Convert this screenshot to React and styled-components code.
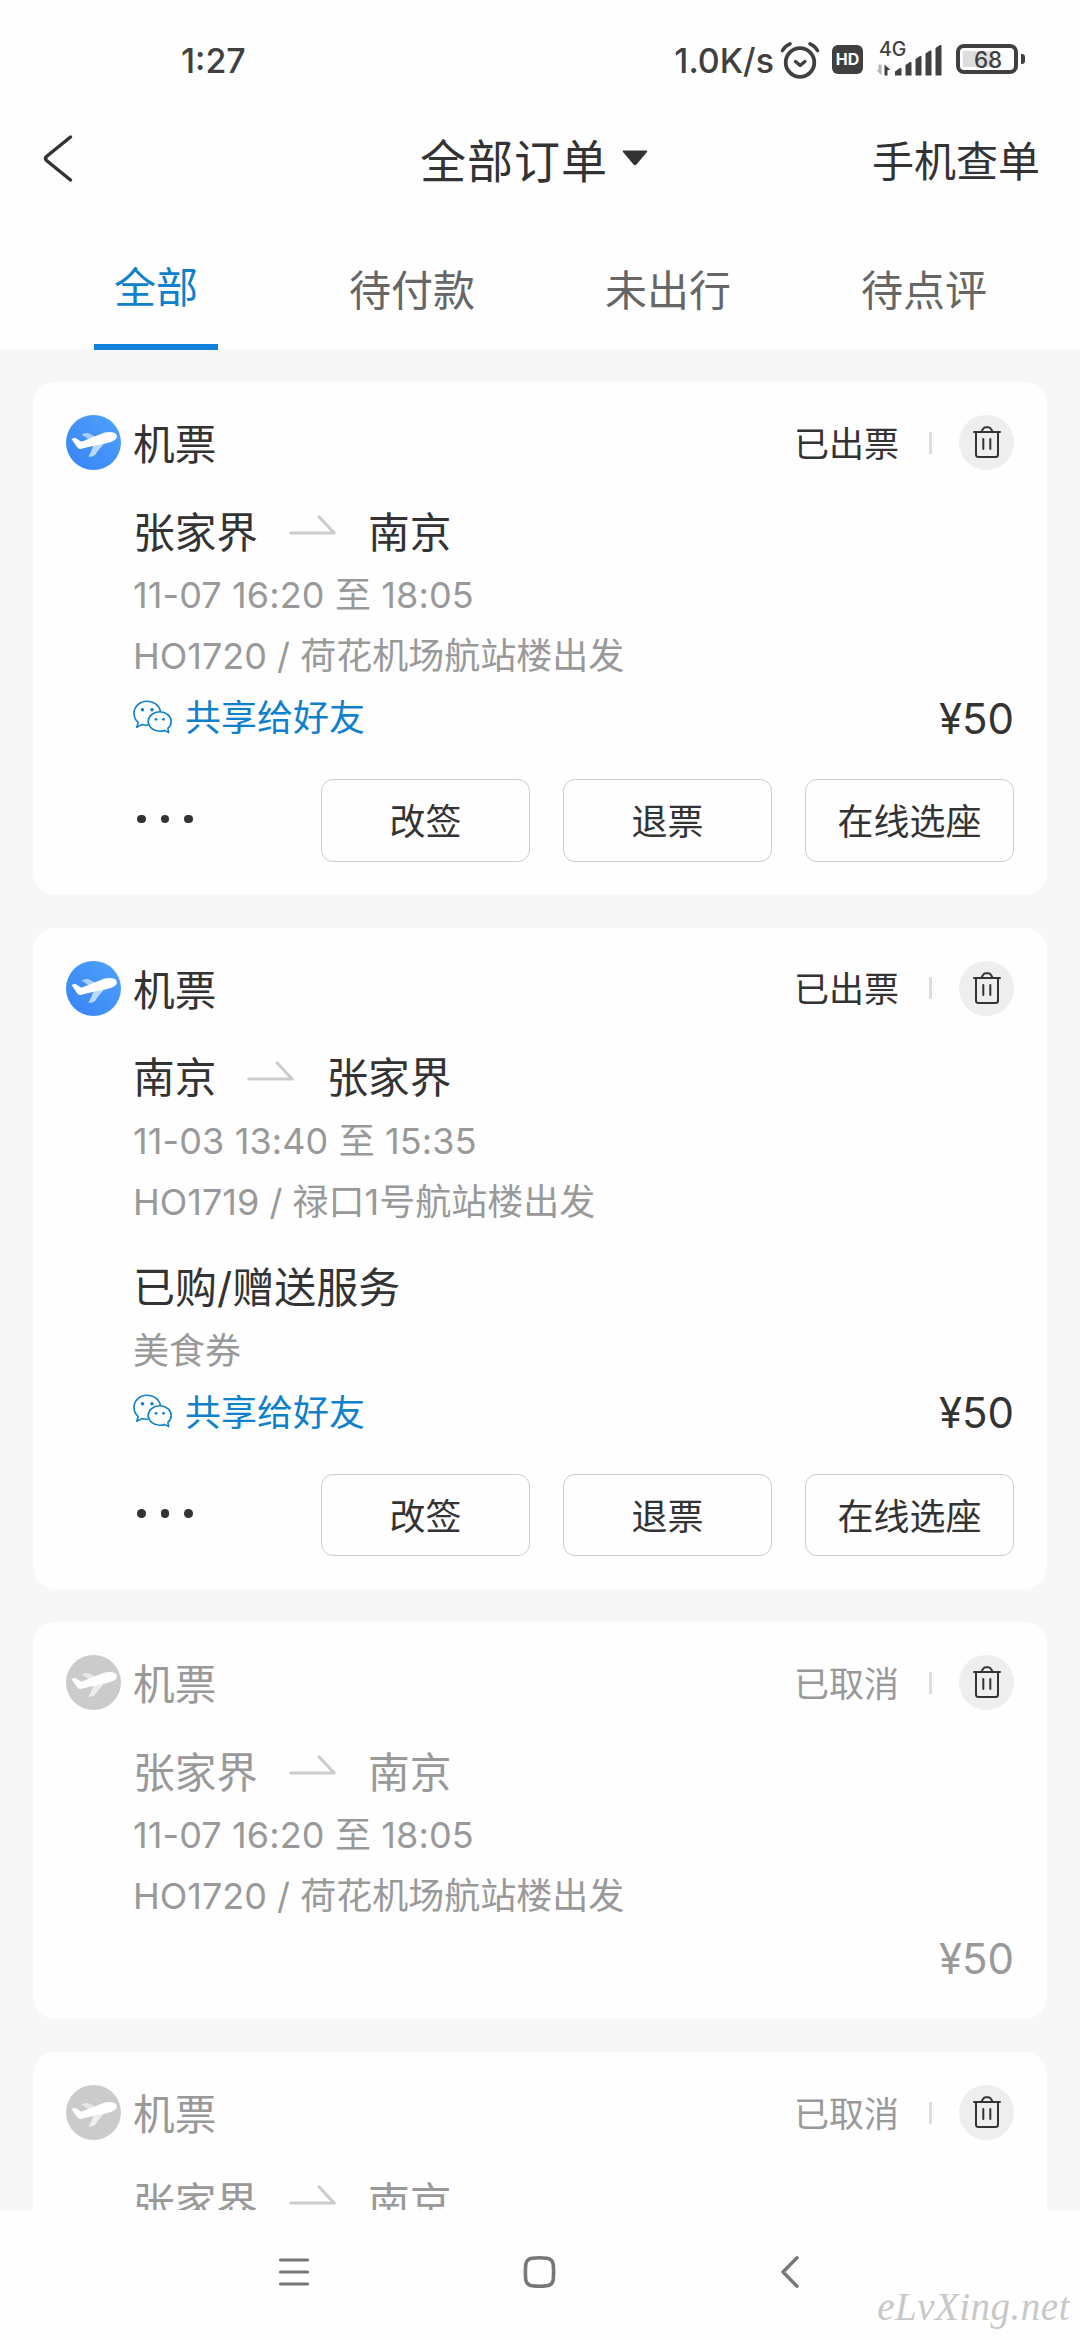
import React from 'react';
import styled, { createGlobalStyle } from 'styled-components';

const colors = {
  text: '#333',
  secondary: '#666',
  muted: '#999',
  blue: '#1080dc',
  link: '#0f80cc',
  page: '#f7f7f7',
};

const GlobalStyle = createGlobalStyle`
  * {
    box-sizing: border-box;
  }

  body {
    margin: 0;
    background: #fff;
    color: ${colors.text};
    font-family: Inter, 'Noto Sans CJK SC', sans-serif;
  }

  svg {
    display: block;
    flex: none;
  }
`;

const Screen = styled.div`
  display: flex;
  flex-direction: column;
  width: 1080px;
  height: 2340px;
  overflow: hidden;
  background: #fefefe;
`;

const StatusBar = styled.div`
  display: flex;
  justify-content: space-between;
  align-items: center;
  height: 120px;
  padding: 0 56px 0 181px;
  color: #404040;
  font-size: 34px;
  font-weight: 500;
`;

const StatusIcons = styled.div`
  display: flex;
  align-items: center;
`;

const Speed = styled.span`
  margin-right: 6px;
`;

const NavBar = styled.header`
  display: grid;
  grid-template-columns: 1fr auto 1fr;
  align-items: center;
  height: 80px;
  padding: 0 40px 0 42px;
`;

const Title = styled.h1`
  display: flex;
  align-items: center;
  gap: 14px;
  margin: 0 0 0 -14px;
  padding-bottom: 4px;
  font-size: 46px;
  font-weight: 400;
  letter-spacing: 1px;
`;

const NavLink = styled.span`
  justify-self: end;
  padding-bottom: 4px;
  font-size: 42px;
`;

const Tabs = styled.nav`
  display: flex;
  flex: none;
  height: 149px;
  padding: 0 28px;
`;

const Tab = styled.div`
  position: relative;
  display: flex;
  flex: 1;
  justify-content: center;
  padding-top: ${({ active }) => (active ? '57px' : '60px')};
  color: ${({ active }) => (active ? colors.link : colors.secondary)};
  font-size: 42px;
  line-height: 62px;

  &::after {
    content: '';
    display: ${({ active }) => (active ? 'block' : 'none')};
    position: absolute;
    bottom: -1px;
    width: 124px;
    height: 6px;
    background: ${colors.blue};
  }
`;

const OrderList = styled.main`
  display: flex;
  flex: none;
  flex-direction: column;
  gap: 33px;
  height: 1861px;
  padding: 33px;
  overflow: hidden;
  background: ${colors.page};
`;

const Card = styled.section`
  flex: none;
  padding: 33px;
  border-radius: 22px;
  background: #fefefe;
  color: ${({ cancelled }) => (cancelled ? colors.muted : colors.text)};
`;

const CardHeader = styled.div`
  display: flex;
  align-items: center;
  height: 55px;
`;

const Category = styled.span`
  flex: 1;
  padding: 5px 0 0 12px;
  font-size: 41.7px;
  line-height: 52px;
`;

const Status = styled.span`
  padding-top: 2px;
  font-size: 35px;
  line-height: 50px;
`;

const Divider = styled.i`
  width: 3px;
  height: 22px;
  margin: 0 27px 0 30px;
  background: #ddd;
`;

const RoundButton = styled.span`
  width: 55px;
  height: 55px;
  border-radius: 50%;
  background: #eee;
`;

const CardBody = styled.div`
  padding: 32px 0 0 67px;
`;

const Route = styled.div`
  display: flex;
  align-items: center;
  gap: 31px;
  height: 61px;
  padding-bottom: 6px;
  font-size: 41.7px;

  svg {
    margin-bottom: 7px;
  }
`;

const Detail = styled.div`
  height: 60px;
  padding-top: ${({ first }) => (first ? '2px' : '3px')};
  color: ${colors.muted};
  font-size: 36px;
  letter-spacing: ${({ first }) => (first ? '0.12px' : 'normal')};
  line-height: 60px;
  white-space: pre;
`;

const Services = styled.div`
  height: 149px;
  padding-top: 28px;
`;

const ServiceTitle = styled.div`
  font-size: 42px;
  line-height: 61px;
`;

const ShareRow = styled.div`
  display: flex;
  align-items: center;
  justify-content: space-between;
  height: 63px;
  padding-top: 6px;
`;

const Share = styled.a`
  display: flex;
  align-items: center;
  gap: 13px;
  color: ${colors.link};
  font-size: 36px;

  svg {
    margin-bottom: 2px;
  }
`;

const ShareLabel = styled.span`
  padding-bottom: 5px;
`;

const Price = styled.span`
  margin-left: auto;
  padding-top: 1px;
  font-size: 42px;
`;

const Actions = styled.div`
  display: flex;
  align-items: center;
  gap: 33px;
  margin-top: 33px;
`;

const More = styled.span`
  display: flex;
  flex: 1;
  gap: 15px;
  padding: 0 0 3px 71px;
`;

const Dot = styled.i`
  width: 8.5px;
  height: 8.5px;
  border-radius: 50%;
  background: ${colors.text};
`;

const ActionButton = styled.button`
  width: 209px;
  height: 82.6px;
  padding: 0 0 2px;
  border: 1px solid #ccc;
  border-radius: 12px;
  background: transparent;
  color: ${colors.text};
  font: inherit;
  font-size: 36px;
`;

const SystemBar = styled.footer`
  position: relative;
  display: flex;
  flex: 1;
  align-items: flex-start;
  padding-top: 45px;
`;

const SystemKey = styled.span`
  width: 33px;
  margin-left: ${({ offset }) => offset}px;
`;

const Watermark = styled.span`
  position: absolute;
  right: 10px;
  bottom: 11px;
  color: #c8c8c8;
  font: italic 39px/44px 'Liberation Serif', serif;
  letter-spacing: 0.5px;
`;

const AlarmIcon = () => (
  <svg width="40" height="40" viewBox="0 0 40 40" fill="none" stroke="#404040" strokeLinecap="round">
    <circle cx="20" cy="22.500" r="14.3" strokeWidth="3.8" />
    <path d="M15.5 21.500l4.700 4 4.700-4" strokeWidth="3.4" strokeLinejoin="round" />
    <path d="M2.5 10.500Q5 6 10 3.800M37.500 10.500Q35 6 30 3.800" strokeWidth="3.600" />
  </svg>
);

const HdBadge = styled.span`
  display: flex;
  align-items: center;
  justify-content: center;
  width: 31px;
  height: 29px;
  margin: 0 13px 2px 12px;
  border-radius: 6px;
  background: #404040;
  color: #fff;
  font-size: 16px;
  font-weight: 700;
`;

const Signal = styled.span`
  position: relative;
  width: 67px;
  height: 36px;
`;

const Network = styled.span`
  position: absolute;
  top: -3px;
  left: 3px;
  font-size: 19.5px;
  line-height: 20px;
`;

const SignalIcon = () => (
  <svg width="67" height="36" viewBox="0 0 67 36" fill="#404040">
    <path d="M19 29.500l5-3.500q1.500-.5 1.500 1v6.500h-6.500zM29.500 23l4.500-3q1.500-.5 1.500 1v12.500h-6zM39.500 17l4.500-3q1.500-.5 1.500 1v18.500h-6zM49.500 11.500l4.500-3q1.500-.5 1.500 1v24h-6zM59.500 6l4.500-3q1.500-.5 1.500 1v29.500h-6z" />
    <path d="M8.500 22.500l6 5.500h-3v5.500h-3z" />
    <path d="M5.500 33.500l-5-5.500h2v-5.500h3z" fill="#b5b5b5" />
  </svg>
);

const Battery = styled.span`
  position: relative;
  display: flex;
  align-items: center;
  justify-content: center;
  width: 62px;
  height: 30px;
  margin: 0 6px 2px 13px;
  padding-left: 2px;
  border: 4px solid #404040;
  border-radius: 8px;
  background: linear-gradient(#ddd, #ddd) 3px center / 31px 16px no-repeat;
  font-size: 22.5px;
  letter-spacing: -0.2px;

  &::after {
    content: '';
    position: absolute;
    right: -11px;
    width: 4px;
    height: 10px;
    border-radius: 0 3px 3px 0;
    background: #404040;
  }
`;

const BackIcon = () => (
  <svg width="32" height="52" viewBox="0 0 32 52" fill="none" stroke="#333" strokeWidth="3.5" strokeLinecap="round" strokeLinejoin="round">
    <path d="M28.500 3L4.500 22.500q-2 2 0 4L28.500 46" />
  </svg>
);

const CaretIcon = () => (
  <svg width="26" height="16" viewBox="0 0 26 16" fill="#333">
    <path d="M1.500 .5h23q1.500 0 .5 1.500L14.500 14.500q-1.500 1.500-3 0L1 2Q0 .5 1.500 .5z" />
  </svg>
);

const PlaneIcon = ({ cancelled }) => (
  <svg width="55" height="55" viewBox="0 0 55 55">
    <defs>
      <linearGradient id="plane-bg" x1="0" y1="1" x2="1" y2="0">
        <stop offset="0" stopColor="#3783f6" />
        <stop offset="1" stopColor="#4fa2fb" />
      </linearGradient>
    </defs>
    <circle cx="27.500" cy="27.500" r="27.500" fill={cancelled ? '#cbcbcb' : 'url(#plane-bg)'} />
    <path d="M15.500 19.500q2.500-2 6.500-1.500l8 4-6 3z" fill="#fff" opacity=".55" />
    <path d="M28 29l10-3.500-1 4.500q-5 5-8 10-2.500 2.500-6.500 1.500 3-5 5.500-12.500z" fill="#fff" opacity=".65" />
    <path d="M5.500 24l3.500-1.200 6.500 4 8-3.300 10-4q8-3.500 14-2 4.500 1.700 3 5.700-2 3-12 5.500-8 1.200-14 2.700l-10 2.500q-2 .2-3.500-2z" fill="#fff" />
  </svg>
);

const TrashIcon = () => (
  <svg width="55" height="55" viewBox="0 0 55 55" fill="none" stroke="#333" strokeWidth="2" strokeLinecap="round" strokeLinejoin="round">
    <path d="M15 17h26M17 17v22.500q0 2.500 2.500 2.500h17q2.500 0 2.500-2.500V17M22.500 16.500l1.500-2.500q1-1.800 3-1.800h2q2 0 3 1.800l1.500 2.500M24.300 24v10M31.300 24v10" />
  </svg>
);

const ArrowIcon = () => (
  <svg width="48" height="22" viewBox="0 0 48 22" fill="none" stroke="#ccc" strokeWidth="3.200" strokeLinecap="round" strokeLinejoin="round">
    <path d="M1.700 18h43.500L30.200 2" />
  </svg>
);

const WechatIcon = () => (
  <svg width="39" height="34" viewBox="0 0 39 34" fill="none" stroke={colors.link} strokeWidth="1.600" strokeLinejoin="round">
    <path d="M27.500 11.500C26 5 20.500 1.300 14.200 1.300 6.500 1.300 1 6.800 1 13.300c0 4 1.800 7.200 4.200 9.200l-1.400 4.700 5-2.600c2 .6 4 .8 6.200 .6" />
    <path d="M26.700 11.800c-6.300 0-11.500 4.300-11.500 9.700s5.200 9.700 11.500 9.700c2 0 3.500-.2 5-.8l4 2.200-.8-4.200c2.200-1.800 3.300-4.200 3.300-6.900 0-5.400-5.200-9.700-11.500-9.700z" />
    <g fill={colors.link} stroke="none">
      <circle cx="9.500" cy="9.800" r="1.800" />
      <circle cx="19" cy="9.800" r="1.800" />
      <circle cx="23" cy="19.300" r="1.400" />
      <circle cx="30.500" cy="19.300" r="1.400" />
    </g>
  </svg>
);

const orders = [
  {
    id: 1,
    status: '已出票',
    from: '张家界',
    to: '南京',
    time: '11-07 16:20 至 18:05',
    flight: 'HO1720 / 荷花机场航站楼出发',
  },
  {
    id: 2,
    status: '已出票',
    from: '南京',
    to: '张家界',
    time: '11-03 13:40 至 15:35',
    flight: 'HO1719 / 禄口1号航站楼出发',
    service: '美食券',
  },
  {
    id: 3,
    status: '已取消',
    from: '张家界',
    to: '南京',
    time: '11-07 16:20 至 18:05',
    flight: 'HO1720 / 荷花机场航站楼出发',
    cancelled: true,
  },
  {
    id: 4,
    status: '已取消',
    from: '张家界',
    to: '南京',
    cancelled: true,
  },
];

const OrderCard = ({ order }) => {
  const { status, from, to, time, flight, service, cancelled } = order;

  return (
    <Card cancelled={cancelled}>
      <CardHeader>
        <PlaneIcon cancelled={cancelled} />
        <Category>机票</Category>
        <Status>{status}</Status>
        <Divider />
        <RoundButton>
          <TrashIcon />
        </RoundButton>
      </CardHeader>
      <CardBody>
        <Route>
          <span>{from}</span>
          <ArrowIcon />
          <span>{to}</span>
        </Route>
        {time && (
          <>
            <Detail first>{time}</Detail>
            <Detail>{flight}</Detail>
            {service && (
              <Services>
                <ServiceTitle>已购/赠送服务</ServiceTitle>
                <Detail>{service}</Detail>
              </Services>
            )}
            <ShareRow>
              {!cancelled && (
                <Share>
                  <WechatIcon />
                  <ShareLabel>共享给好友</ShareLabel>
                </Share>
              )}
              <Price>¥50</Price>
            </ShareRow>
          </>
        )}
      </CardBody>
      {!cancelled && (
        <Actions>
          <More>
            <Dot />
            <Dot />
            <Dot />
          </More>
          <ActionButton>改签</ActionButton>
          <ActionButton>退票</ActionButton>
          <ActionButton>在线选座</ActionButton>
        </Actions>
      )}
    </Card>
  );
};

const App = () => (
  <>
    <GlobalStyle />
    <Screen>
      <StatusBar>
        <span>1:27</span>
        <StatusIcons>
          <Speed>1.0K/s</Speed>
          <AlarmIcon />
          <HdBadge>HD</HdBadge>
          <Signal>
            <SignalIcon />
            <Network>4G</Network>
          </Signal>
          <Battery>68</Battery>
        </StatusIcons>
      </StatusBar>
      <NavBar>
        <BackIcon />
        <Title>
          全部订单
          <CaretIcon />
        </Title>
        <NavLink>手机查单</NavLink>
      </NavBar>
      <Tabs>
        <Tab active>全部</Tab>
        <Tab>待付款</Tab>
        <Tab>未出行</Tab>
        <Tab>待点评</Tab>
      </Tabs>
      <OrderList>
        {orders.map(order => (
          <OrderCard key={order.id} order={order} />
        ))}
      </OrderList>
      <SystemBar>
        <SystemKey offset={278}>
          <svg width="33" height="34" viewBox="0 0 33 34" stroke="#777" strokeWidth="3.200" strokeLinecap="round">
            <path d="M2.500 5h27M2.500 17h27M2.500 29h27" />
          </svg>
        </SystemKey>
        <SystemKey offset={212}>
          <svg width="33" height="34" viewBox="0 0 33 34" fill="none" stroke="#777" strokeWidth="3.600">
            <path d="M9 3.200Q16.500 2.200 24 3.200q5.500 .8 6.200 6 .8 7.800 0 15.600-.7 5.200-6.200 6-7.500 1-15 0-5.500-.8-6.200-6-.8-7.800 0-15.600Q3.500 4 9 3.200z" />
          </svg>
        </SystemKey>
        <SystemKey offset={222}>
          <svg width="33" height="34" viewBox="0 0 33 34" fill="none" stroke="#777" strokeWidth="3.400" strokeLinecap="round" strokeLinejoin="round">
            <path d="M19 2.800L5 17l14 14.200" />
          </svg>
        </SystemKey>
        <Watermark>eLvXing.net</Watermark>
      </SystemBar>
    </Screen>
  </>
);

export default App;
